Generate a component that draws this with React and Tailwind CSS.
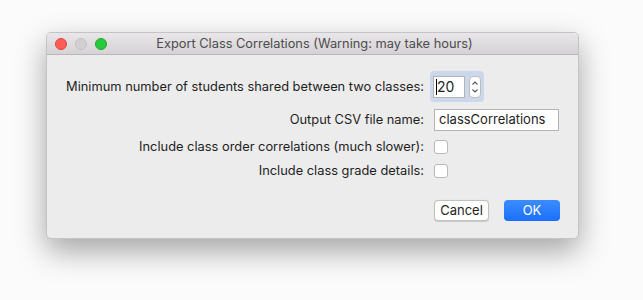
import React from 'react';

const ExportDialog = () => {
  const font = { fontFamily: 'Inter, "Noto Sans", "Liberation Sans", sans-serif' };

  return (
    <div className="w-[643px] h-[300px] bg-[#fbfbfb] overflow-hidden" style={font}>
      <div className="ml-[46px] mt-[32px] w-[533px] h-[207px] rounded-[5px] bg-[#ececec] border border-[#c4c4c4] shadow-[0_12px_30px_rgba(0,0,0,0.35)] overflow-hidden flex flex-col">
        {/* Title bar */}
        <div className="relative h-[22px] shrink-0 bg-gradient-to-b from-[#e9e7e9] to-[#d4d2d4] border-b border-[#b8b8b8] flex items-center justify-center">
          <div className="absolute left-[8px] top-[5px] flex gap-[8px]">
            <span className="w-[12px] h-[12px] rounded-full bg-[#fd5e56] border border-[#e0443e]" />
            <span className="w-[12px] h-[12px] rounded-full bg-[#d2d0d2] border border-[#c2c0c2]" />
            <span className="w-[12px] h-[12px] rounded-full bg-[#28c840] border border-[#1aab29]" />
          </div>
          <span className="text-[12.8px] text-[#4c4c4c] pl-[4px]">Export Class Correlations (Warning: may take hours)</span>
        </div>

        {/* Body */}
        <div className="flex flex-col pt-[16px] text-[12.85px] text-[#1e1e1e]">
          <div className="flex items-center h-[31px]">
            <div className="w-[377px] text-right">Minimum number of students shared between two classes:</div>
            <div className="ml-[6px] flex items-center gap-[4px] h-[31px] px-[3px] rounded-[4px] bg-[#cdd7ec]">
              <div className="w-[32px] h-[22px] bg-white border border-[#b4b4b4] flex items-center pl-[2px] text-[14px]">
                <span className="w-px h-[16px] bg-black" />
                <span>20</span>
              </div>
              <div className="w-[12px] h-[22px] rounded-[4px] bg-white border border-[#bdbdbd] flex flex-col items-center justify-center">
                <svg width="8" height="16" viewBox="0 0 8 16" fill="none" stroke="#555" strokeWidth="1.1">
                  <path d="M1.5 5.5 L4 3 L6.5 5.5" />
                  <path d="M1.5 10.5 L4 13 L6.5 10.5" />
                </svg>
              </div>
            </div>
          </div>

          <div className="flex items-center h-[22px] mt-[7px]">
            <div className="w-[377px] text-right">Output CSV file name:</div>
            <div className="ml-[10px] w-[125px] h-[22px] bg-white border border-[#b4b4b4] flex items-center px-[4px] text-[13px]">
              classCorrelations
            </div>
          </div>

          <div className="flex items-center h-[22px] mt-[5px]">
            <div className="w-[377px] text-right">Include class order correlations (much slower):</div>
            <span className="ml-[10px] w-[14px] h-[14px] rounded-[3px] bg-white border border-[#b9b9b9]" />
          </div>

          <div className="flex items-center h-[22px] mt-[2px]">
            <div className="w-[377px] text-right">Include class grade details:</div>
            <span className="ml-[10px] w-[14px] h-[14px] rounded-[3px] bg-white border border-[#b9b9b9]" />
          </div>

          <div className="flex items-center mt-[18px] ml-[387px] gap-[15px]">
            <button className="w-[55px] h-[21px] rounded-[4px] bg-white border border-[#c0c0c0] text-[13px] text-[#1e1e1e] shadow-[0_0.5px_1px_rgba(0,0,0,0.15)]">
              Cancel
            </button>
            <button className="w-[56px] h-[21px] rounded-[4px] bg-gradient-to-b from-[#3b8dfd] to-[#1a6ffb] text-[13px] text-white">
              OK
            </button>
          </div>
        </div>
      </div>
    </div>
  );
};

export default function App() {
  return <ExportDialog />;
}
